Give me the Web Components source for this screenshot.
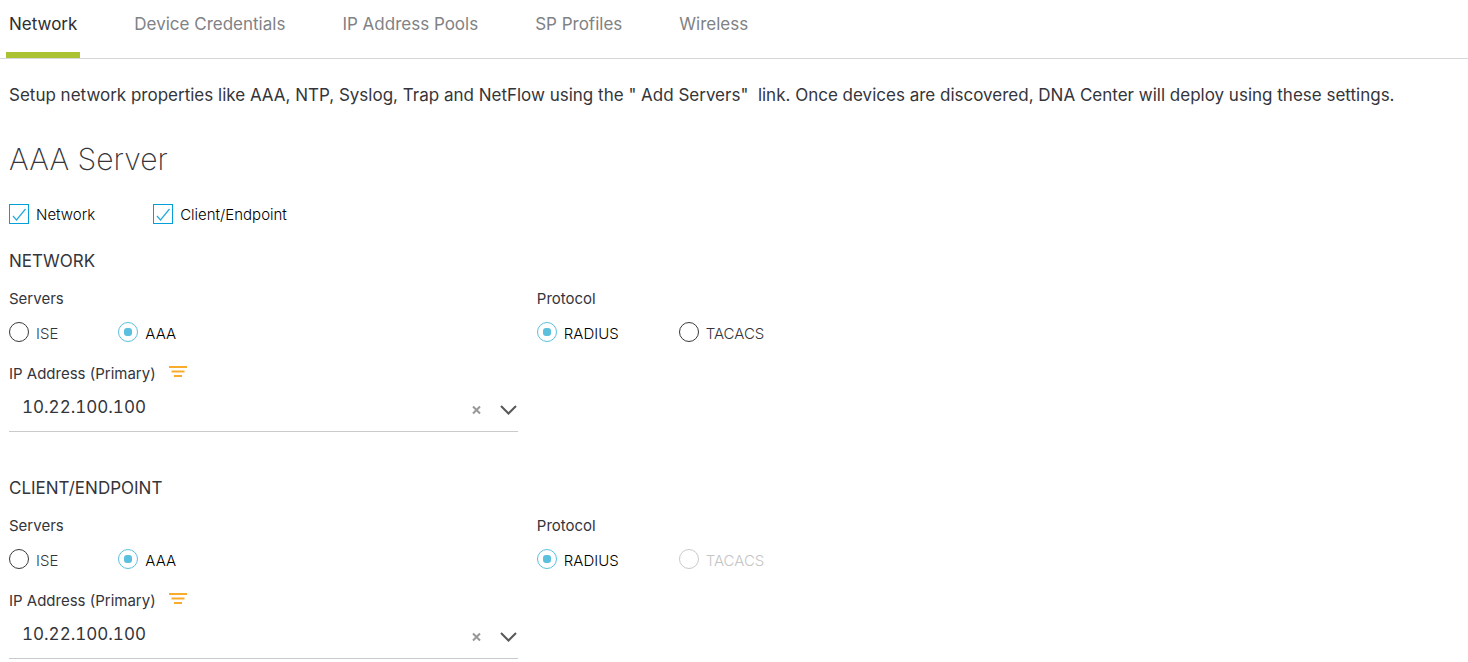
<!DOCTYPE html>
<html lang="en">
<head>
<meta charset="utf-8">
<title>Network Settings</title>
<style>
  body { margin: 0; background: #fff; color: #34353b; font-family: Inter, "Liberation Sans", sans-serif; font-size: 17px; }
</style>
</head>
<body>
<settings-page></settings-page>

<template id="settings-page">
  <style>
    :host { display: block; }
    main { padding: 24px 9px 0; }
    p { margin: 0; line-height: 24px; }
    h1 { margin: 32px 0 0; font-size: 30px; font-weight: 200; line-height: 40px; }
    .scope { display: flex; gap: 58px; margin-top: 25px; }
    server-section { margin-top: 23px; }
    server-section + server-section { margin-top: 44px; }
  </style>
  <tab-bar>
    <tab-link current>Network</tab-link>
    <tab-link>Device Credentials</tab-link>
    <tab-link>IP Address Pools</tab-link>
    <tab-link>SP Profiles</tab-link>
    <tab-link>Wireless</tab-link>
  </tab-bar>
  <main>
    <p>Setup network properties like AAA, NTP, Syslog, Trap and NetFlow using the " Add Servers" &nbsp;link. Once devices are discovered, DNA Center will deploy using these settings.</p>
    <h1>AAA Server</h1>
    <div class="scope">
      <check-option>Network</check-option>
      <check-option>Client/Endpoint</check-option>
    </div>
    <server-section>NETWORK</server-section>
    <server-section locked="TACACS">CLIENT/ENDPOINT</server-section>
  </main>
</template>

<template id="tab-bar">
  <style>
    :host { display: block; border-bottom: 1px solid #d6d7d8; }
    nav { display: flex; gap: 51px; padding: 0 6px; height: 58px; }
  </style>
  <nav><slot></slot></nav>
</template>

<template id="tab-link">
  <style>
    :host { display: block; }
    a { display: block; box-sizing: border-box; height: 58px; padding: 12px 3px 0; line-height: 24px; color: #808285; text-decoration: none; white-space: nowrap; }
    :host([current]) a { color: #2c2d30; border-bottom: 6px solid #abc233; }
  </style>
  <a href="#"><slot></slot></a>
</template>

<template id="check-option">
  <style>
    :host { display: block; }
    label { display: flex; gap: 7px; font-size: 15px; font-weight: 300; line-height: 22px; color: #000; }
    .box { display: grid; width: 20px; height: 20px; }
    input, svg { grid-area: 1 / 1; width: 20px; height: 20px; }
    input { appearance: none; box-sizing: border-box; margin: 0; border: 1px solid #049fd9; }
    svg { fill: none; stroke: #26a9dd; stroke-width: 1.2; pointer-events: none; }
    input:not(:checked) + svg { visibility: hidden; }
  </style>
  <label><span class="box"><input type="checkbox" checked><svg viewBox="0 0 20 20"><path d="M4 12l3.500 4L16.500 5"/></svg></span><slot></slot></label>
</template>

<template id="radio-group">
  <style>
    :host { display: block; }
    fieldset { margin: 0; padding: 0; border: 0; min-width: 0; }
    legend { padding: 0; font-size: 15px; line-height: 20px; }
    .options { display: flex; gap: 60px; margin-top: 13px; }
    label { display: flex; gap: 7px; font-size: 15px; font-weight: 300; line-height: 24px; color: #34353b; }
    input { appearance: none; box-sizing: border-box; display: grid; place-content: center; width: 20px; height: 20px; margin: 0; border: 1px solid #39393b; border-radius: 50%; }
    input:checked { border-color: #5bc0de; }
    input:checked::before { content: ""; width: 8px; height: 8px; border-radius: 3px; background: #5bc0de; }
    label:has(:checked) { color: #000; }
    label:has(:disabled) { color: #c4c5c6; }
    input:disabled { border-color: #c9cacb; }
  </style>
  <fieldset><legend></legend><div class="options"></div></fieldset>
</template>

<template id="address-field">
  <style>
    :host { display: block; }
    .caption { display: flex; gap: 13px; font-size: 15px; line-height: 20px; }
    .caption svg { width: 18px; height: 12px; margin-top: 2px; stroke: #fbab2c; stroke-width: 2; }
    .field { display: grid; height: 47px; border-bottom: 1px solid #c9cacb; }
    select { grid-area: 1 / 1; appearance: none; width: 100%; height: 46px; margin: 0; padding: 0 60px 0 13px; border: 0; background: none; color: #34353b; font: inherit; font-variant-numeric: tabular-nums; }
    .tools { grid-area: 1 / 1; justify-self: end; display: flex; align-items: center; gap: 18px; padding-top: 4px; pointer-events: none; }
    button { display: flex; padding: 0; border: 0; background: none; pointer-events: auto; }
    .clear { width: 10px; height: 10px; stroke: #97989a; stroke-width: 2; }
    .arrow { width: 18px; height: 12px; fill: none; stroke: #58585b; stroke-width: 2; }
  </style>
  <div class="caption">
    <label for="address">IP Address (Primary)</label>
    <svg viewBox="0 0 18 12"><path d="M0 1h18M2.500 5.500h13M5 10h8"/></svg>
  </div>
  <div class="field">
    <select id="address"><option>10.22.100.100</option></select>
    <div class="tools">
      <button type="button" aria-label="Clear"><svg class="clear" viewBox="0 0 10 10"><path d="M1 1.500l7 7M8 1.500l-7 7"/></svg></button>
      <svg class="arrow" viewBox="0 0 18 12"><path d="M1 2l7.500 7.500L16 2"/></svg>
    </div>
  </div>
</template>

<template id="server-section">
  <style>
    :host { display: block; }
    h2 { margin: 0; font-size: 17px; font-weight: 400; line-height: 24px; }
    .columns { display: grid; grid-template-columns: 16fr 29fr; column-gap: 19px; margin-top: 16px; }
    address-field { margin-top: 18px; }
  </style>
  <h2><slot></slot></h2>
  <div class="columns">
    <div>
      <radio-group legend="Servers" options="ISE,AAA" value="AAA"></radio-group>
      <address-field></address-field>
    </div>
    <radio-group class="protocol" legend="Protocol" options="RADIUS,TACACS" value="RADIUS"></radio-group>
  </div>
</template>

<script>
  class TemplateElement extends HTMLElement {
    constructor() {
      super();
      const template = document.getElementById(this.localName);
      this.attachShadow({ mode: "open" }).append(template.content.cloneNode(true));
    }
  }

  class RadioGroup extends TemplateElement {
    static observedAttributes = ["locked"];

    connectedCallback() { this.render(); }

    attributeChangedCallback() { if (this.isConnected) this.render(); }

    render() {
      this.shadowRoot.querySelector("legend").textContent = this.getAttribute("legend");
      const locked = this.getAttribute("locked");
      const labels = this.getAttribute("options").split(",").map(name => {
        const label = document.createElement("label");
        const input = document.createElement("input");
        input.type = "radio";
        input.name = "choice";
        input.value = name;
        input.checked = name === this.getAttribute("value");
        input.disabled = name === locked;
        const text = document.createElement("span");
        text.textContent = name;
        label.append(input, text);
        return label;
      });
      this.shadowRoot.querySelector(".options").replaceChildren(...labels);
    }
  }

  class ServerSection extends TemplateElement {
    connectedCallback() {
      if (this.hasAttribute("locked")) {
        this.shadowRoot.querySelector(".protocol").setAttribute("locked", this.getAttribute("locked"));
      }
    }
  }

  customElements.define("tab-link", class extends TemplateElement {});
  customElements.define("tab-bar", class extends TemplateElement {});
  customElements.define("check-option", class extends TemplateElement {});
  customElements.define("radio-group", RadioGroup);
  customElements.define("address-field", class extends TemplateElement {});
  customElements.define("server-section", ServerSection);
  customElements.define("settings-page", class extends TemplateElement {});
</script>
</body>
</html>
